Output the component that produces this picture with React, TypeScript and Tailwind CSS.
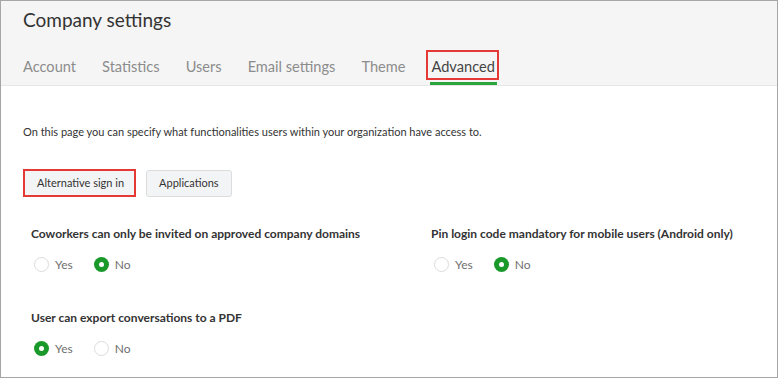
import React from "react";

const tabs = ["Account", "Statistics", "Users", "Email settings", "Theme"];

function Radio({ checked, label }: { checked: boolean; label: string }) {
  return (
    <label className="flex items-center gap-[6px]">
      {checked ? (
        <span className="flex h-[15px] w-[15px] items-center justify-center rounded-full bg-[#18992a]">
          <span className="h-[5px] w-[5px] rounded-full bg-white" />
        </span>
      ) : (
        <span className="h-[15px] w-[15px] rounded-full border border-[#dcdcdc] bg-white" />
      )}
      <span className="text-[12px] leading-[15px] text-[#707070]">{label}</span>
    </label>
  );
}

function Setting({ title, value }: { title: string; value: "yes" | "no" }) {
  return (
    <div>
      <div className="text-[12px] font-bold leading-[15px] text-[#333]">{title}</div>
      <div className="mt-[16px] flex gap-[21px] pl-[3px]">
        <Radio checked={value === "yes"} label="Yes" />
        <Radio checked={value === "no"} label="No" />
      </div>
    </div>
  );
}

export default function App() {
  return (
    <div
      className="h-[378px] w-[778px] overflow-hidden border border-[#a6a6a6] bg-white"
      style={{ fontFamily: "Lato, 'Open Sans', sans-serif" }}
    >
      <div className="flex h-[85px] flex-col border-b border-[#e6e6e6] bg-[#f5f5f5] pl-[22px]">
        <h1 className="pt-[7px] text-[19px] leading-[23px] text-[#333]">Company settings</h1>
        <div className="mt-auto flex items-end gap-[26px]">
          {tabs.map((t) => (
            <span key={t} className="pb-[9px] text-[14.6px] leading-[18px] text-[#8c8c8c]">
              {t}
            </span>
          ))}
          <div className="-ml-[5px] flex flex-col">
            <span className="border-2 border-[#e53935] pb-[2px] pl-[3px] pr-[2px] pt-[6px] text-[14.6px] leading-[18px] text-[#444]">
              Advanced
            </span>
            <span className="ml-[4px] mr-[2px] mt-[2px] h-[3px] bg-[#2ba43b]" />
          </div>
        </div>
      </div>

      <div className="pl-[22px]">
        <p className="pt-[39px] text-[11px] leading-[13px] text-[#333]">
          On this page you can specify what functionalities users within your organization have access to.
        </p>

        <div className="mt-[31px] flex items-center gap-[10px]">
          <button className="h-[28px] border-2 border-[#e53935] bg-[#f3f4f6] pl-[12px] pr-[10px] text-[11px] text-[#333]">
            Alternative sign in
          </button>
          <button className="h-[27px] rounded-[3px] border border-[#dcdcdc] bg-[#f3f4f6] px-[12px] text-[11px] text-[#333]">
            Applications
          </button>
        </div>

        <div className="mt-[29px] grid grid-cols-[400px_1fr] gap-y-[38px] pl-[8px]">
          <Setting title="Coworkers can only be invited on approved company domains" value="no" />
          <Setting title="Pin login code mandatory for mobile users (Android only)" value="no" />
          <Setting title="User can export conversations to a PDF" value="yes" />
        </div>
      </div>
    </div>
  );
}
